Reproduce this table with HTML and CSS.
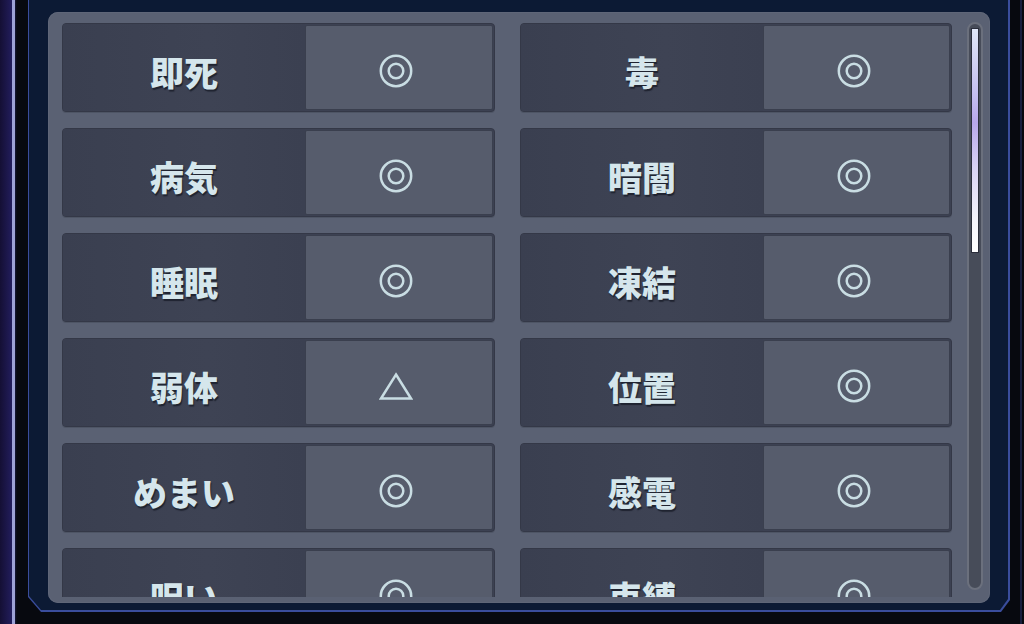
FILE: index.html
```html
<!DOCTYPE html>
<html lang="ja">
<head>
<meta charset="utf-8">
<title>状態異常耐性</title>
<link rel="stylesheet" href="styles.css">
</head>
<body>
<div class="screen">
  <div class="deco-purple"></div>
  <div class="deco-light"></div>
  <div class="deco-dark"></div>
  <div class="frame-col">
    <div class="frame">
      <div class="frame-inner">
        <div class="panel">
          <div class="list">
            <div class="cell"><div class="label">即死</div><div class="value"><svg class="mark" viewBox="0 0 34 34"><circle cx="17" cy="17" r="15.2"/><circle cx="17" cy="17" r="7.3"/></svg></div></div>
            <div class="cell"><div class="label">毒</div><div class="value"><svg class="mark" viewBox="0 0 34 34"><circle cx="17" cy="17" r="15.2"/><circle cx="17" cy="17" r="7.3"/></svg></div></div>
            <div class="cell"><div class="label">病気</div><div class="value"><svg class="mark" viewBox="0 0 34 34"><circle cx="17" cy="17" r="15.2"/><circle cx="17" cy="17" r="7.3"/></svg></div></div>
            <div class="cell"><div class="label">暗闇</div><div class="value"><svg class="mark" viewBox="0 0 34 34"><circle cx="17" cy="17" r="15.2"/><circle cx="17" cy="17" r="7.3"/></svg></div></div>
            <div class="cell"><div class="label">睡眠</div><div class="value"><svg class="mark" viewBox="0 0 34 34"><circle cx="17" cy="17" r="15.2"/><circle cx="17" cy="17" r="7.3"/></svg></div></div>
            <div class="cell"><div class="label">凍結</div><div class="value"><svg class="mark" viewBox="0 0 34 34"><circle cx="17" cy="17" r="15.2"/><circle cx="17" cy="17" r="7.3"/></svg></div></div>
            <div class="cell"><div class="label">弱体</div><div class="value"><svg class="mark" viewBox="0 0 34 34"><path d="M17 5.5 L32 29.5 L2 29.5 Z"/></svg></div></div>
            <div class="cell"><div class="label">位置</div><div class="value"><svg class="mark" viewBox="0 0 34 34"><circle cx="17" cy="17" r="15.2"/><circle cx="17" cy="17" r="7.3"/></svg></div></div>
            <div class="cell"><div class="label">めまい</div><div class="value"><svg class="mark" viewBox="0 0 34 34"><circle cx="17" cy="17" r="15.2"/><circle cx="17" cy="17" r="7.3"/></svg></div></div>
            <div class="cell"><div class="label">感電</div><div class="value"><svg class="mark" viewBox="0 0 34 34"><circle cx="17" cy="17" r="15.2"/><circle cx="17" cy="17" r="7.3"/></svg></div></div>
            <div class="cell"><div class="label">呪い</div><div class="value"><svg class="mark" viewBox="0 0 34 34"><circle cx="17" cy="17" r="15.2"/><circle cx="17" cy="17" r="7.3"/></svg></div></div>
            <div class="cell"><div class="label">束縛</div><div class="value"><svg class="mark" viewBox="0 0 34 34"><circle cx="17" cy="17" r="15.2"/><circle cx="17" cy="17" r="7.3"/></svg></div></div>
          </div>
          <div class="gutter">
            <div class="track"><div class="thumb"></div></div>
          </div>
        </div>
      </div>
    </div>
  </div>
  <div class="deco-right"></div>
</div>
</body>
</html>
```

FILE: styles.css
```css
* { box-sizing: border-box; }
html, body { margin: 0; padding: 0; }
body {
  background: #07090f;
  font-family: "Noto Sans CJK JP", "Noto Sans", sans-serif;
}
.screen {
  width: 1024px;
  height: 624px;
  display: flex;
  background: #07090f;
  overflow: hidden;
}
.deco-purple {
  width: 12px;
  background: linear-gradient(90deg, #140f34, #221d5c);
}
.deco-light {
  width: 3px;
  background: #9da2d6;
}
.deco-dark {
  width: 13px;
  background: linear-gradient(90deg, #16183a 0, #07090f 2px, #07090f 100%);
}
.frame-col {
  width: 982px;
  display: flex;
  flex-direction: column;
}
.frame {
  height: 612px;
  background: #3a4d9c;
  padding: 0 2px 2px 1px;
  clip-path: polygon(0 0, 100% 0, 100% calc(100% - 12px), calc(100% - 9px) 100%, 13px 100%, 0 calc(100% - 15px));
}
.frame-inner {
  height: 100%;
  background: #0c1a34;
  padding: 12px 18px 7px 19px;
  clip-path: polygon(0 0, 100% 0, 100% calc(100% - 11px), calc(100% - 8px) 100%, 12px 100%, 0 calc(100% - 14px));
}
.panel {
  height: 591px;
  background: #5a6173;
  border-radius: 10px;
  display: flex;
  padding: 11px 0 6px 14px;
  box-shadow: inset 0 0 0 1px #5f6678;
}
.list {
  width: 890px;
  height: 574px;
  overflow: hidden;
  display: grid;
  grid-template-columns: 433px 432px;
  grid-auto-rows: 89px;
  column-gap: 25px;
  row-gap: 16px;
}
.cell {
  display: flex;
  background: #3c4152;
  border: 1px solid #343847;
  border-radius: 4px;
  box-shadow: 0 1px 0 rgba(70,76,92,0.6);
}
.label {
  width: 242px;
  display: flex;
  align-items: center;
  justify-content: center;
  padding-top: 7px;
  font-size: 34px;
  font-weight: 900;
  color: #d5e6ec;
  letter-spacing: 0;
  text-shadow: 1px 2px 1px #1f2330;
  background: linear-gradient(90deg, #3a3f50, #3e4354 60%, #3b4051);
  border-radius: 3px 0 0 3px;
}
.value {
  flex: 1;
  margin: 1px 1px 1px 0;
  background: #565c6c;
  border: 1px solid #3a3f4e;
  border-radius: 2px;
  display: flex;
  align-items: center;
  justify-content: center;
  padding: 7px 6px 0 0;
}
.mark {
  width: 34px;
  height: 34px;
  fill: none;
  stroke: #c9dde3;
  stroke-width: 2.5;
  stroke-linejoin: miter;
}
.gutter {
  width: 38px;
  padding: 0 7px 0 15px;
  margin-top: -1px;
}
.track {
  width: 16px;
  height: 568px;
  background: #474c59;
  border: 2px solid #6b707d;
  border-radius: 8px;
  padding: 4px 0 0 2px;
}
.thumb {
  width: 8px;
  height: 225px;
  border: 1px solid #2b2e3b;
  background: linear-gradient(180deg, #dfe6f7 0%, #c4bdf0 30%, #b7a6ea 42%, #d8d2f4 62%, #f3f3fb 85%, #ffffff 100%);
}
.deco-right {
  width: 14px;
  background: linear-gradient(90deg, #07090f 0, #07090f 10px, #27346e 11px, #07090f 12px);
}
```
